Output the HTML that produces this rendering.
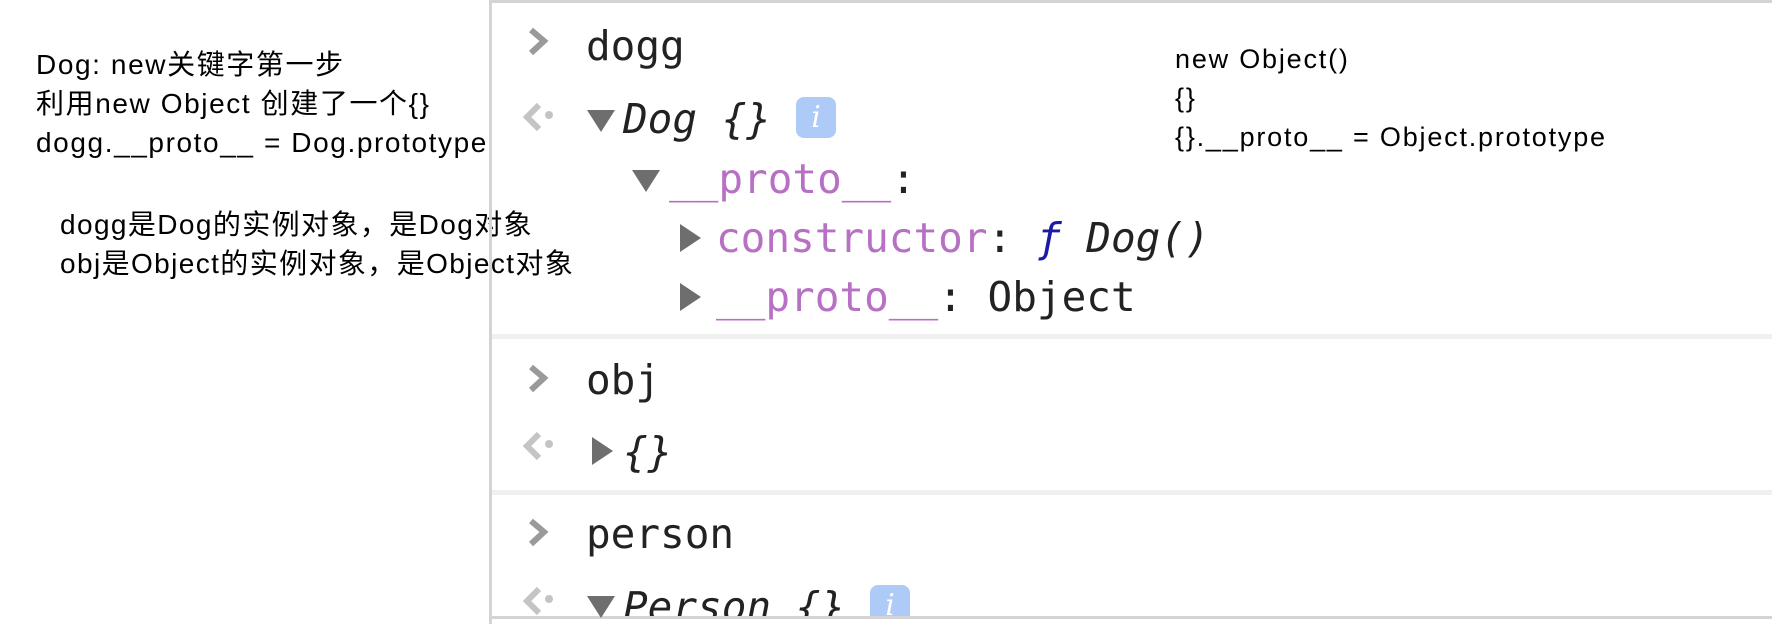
<!DOCTYPE html>
<html><head><meta charset="utf-8"><style>
html,body{margin:0;padding:0;width:1772px;height:624px;overflow:hidden;background:#fff;}
.n{position:absolute;font-family:"Liberation Sans","Noto Sans CJK SC",sans-serif;color:#000;white-space:nowrap;}
.m{position:absolute;font-family:"DejaVu Sans Mono","Liberation Mono",monospace;font-size:41px;color:#222;white-space:nowrap;line-height:50px;}
.i{font-style:italic;}
.p{color:#b870c4;}
.tri{position:absolute;width:0;height:0;}
.down{border-left:14px solid transparent;border-right:14px solid transparent;border-top:22px solid #6e6e6e;}
.right{border-top:14px solid transparent;border-bottom:14px solid transparent;border-left:21px solid #6e6e6e;}
.sep{position:absolute;left:492px;width:1280px;height:5px;background:#f0f0f0;}
.badge{position:absolute;width:40px;height:41px;background:#aecbf8;border-radius:8px;color:#fff;font:italic 30px "DejaVu Serif",serif;text-align:center;line-height:41px;}
</style></head><body>
<div class="n" style="left:36px;top:45px;font-size:28px;letter-spacing:1.6px;line-height:39px;">Dog: new关键字第一步<br>利用new Object 创建了一个{}<br>dogg.__proto__ = Dog.prototype</div>
<div class="n" style="left:60px;top:205px;font-size:28px;letter-spacing:1.4px;line-height:39px;">dogg是Dog的实例对象，是Dog对象<br>obj是Object的实例对象，是Object对象</div>
<div class="n" style="left:1175px;top:40px;font-size:27px;letter-spacing:1.8px;line-height:39px;">new Object()<br>{}<br>{}.__proto__ = Object.prototype</div>

<div style="position:absolute;left:489px;top:0;width:3px;height:624px;background:#d4d4d4;"></div>
<div style="position:absolute;left:489px;top:0;width:1283px;height:3px;background:#d4d4d4;"></div>
<div class="sep" style="top:334px;"></div>
<div class="sep" style="top:490px;"></div>
<div style="position:absolute;left:492px;top:616px;width:1280px;height:3px;background:#d4d4d4;"></div>

<svg style="position:absolute;left:0;top:0" width="1772" height="624">
<g fill="none" stroke="#9a9a9a" stroke-width="6">
<path d="M531 30 L544 41 L531 53"/>
<path d="M531 367 L544 378 L531 390"/>
<path d="M531 521 L544 532 L531 544"/>
</g>
<g fill="none" stroke="#c4c4c4" stroke-width="6">
<path d="M539 105 L527 117 L539 129"/>
<path d="M539 434 L527 446 L539 458"/>
<path d="M539 589 L527 601 L539 613"/>
</g>
<g fill="#c4c4c4"><circle cx="549" cy="115" r="4"/><circle cx="549" cy="444" r="4"/><circle cx="549" cy="599" r="4"/></g>
</svg>

<div class="m" style="left:586px;top:21px;">dogg</div>
<div class="tri down" style="left:587px;top:110px;"></div>
<div class="m i" style="left:623px;top:94px;">Dog {}</div>
<div class="badge" style="left:796px;top:97px;">i</div>
<div class="tri down" style="left:632px;top:170px;"></div>
<div class="m" style="left:669px;top:154px;"><span class="p">__proto__</span>:</div>
<div class="tri right" style="left:680px;top:224px;"></div>
<div class="m" style="left:716px;top:213px;"><span class="p">constructor</span>: <span class="i" style="color:#1a1aa6">ƒ</span> <span class="i">Dog()</span></div>
<div class="tri right" style="left:680px;top:283px;"></div>
<div class="m" style="left:716px;top:272px;"><span class="p">__proto__</span>: Object</div>

<div class="m" style="left:586px;top:355px;">obj</div>
<div class="tri right" style="left:592px;top:437px;"></div>
<div class="m i" style="left:623px;top:427px;">{}</div>

<div class="m" style="left:586px;top:509px;">person</div>
<div class="tri down" style="left:587px;top:596px;"></div>
<div style="position:absolute;left:0;top:0;width:1772px;height:616px;overflow:hidden;">
<div class="m i" style="left:623px;top:582px;">Person {}</div>
<div class="badge" style="left:870px;top:585px;">i</div>
</div>
</body></html>
